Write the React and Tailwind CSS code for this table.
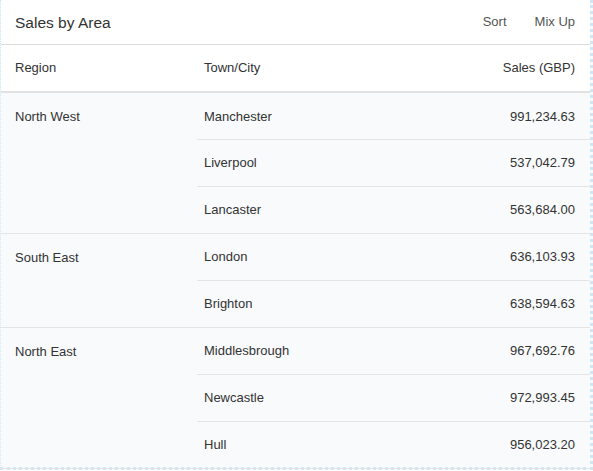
const data = [
  {
    region: "North West",
    towns: [
      ["Manchester", "991,234.63"],
      ["Liverpool", "537,042.79"],
      ["Lancaster", "563,684.00"],
    ],
  },
  {
    region: "South East",
    towns: [
      ["London", "636,103.93"],
      ["Brighton", "638,594.63"],
    ],
  },
  {
    region: "North East",
    towns: [
      ["Middlesbrough", "967,692.76"],
      ["Newcastle", "972,993.45"],
      ["Hull", "956,023.20"],
    ],
  },
];

export default function App() {
  return (
    <div className="h-[471px] w-[593px] bg-white font-['Liberation_Sans',Arial,sans-serif] text-[#333]">
      <div className="w-[593px] h-[470px] border-l border-r-[3px] border-b-[3px] border-dotted border-l-[#cfe6f5] border-r-[#cfe6f5] border-b-[#cfe6f5] bg-[#f9fafc] flex flex-col">
        <div className="h-[45px] shrink-0 flex items-center justify-between pl-[14px] pr-[15px] bg-white border-b border-[#dcdcdc]">
          <span className="text-[15.5px] text-[#333] mt-[1px]">Sales by Area</span>
          <div className="flex gap-[28px] text-[13px] text-[#555]">
            <span>Sort</span>
            <span>Mix Up</span>
          </div>
        </div>
        <table className="w-full border-collapse text-[13px]">
          <thead>
            <tr className="h-[47px] bg-white border-b-2 border-[#e2e2e2]">
              <th className="w-[196px] pl-[14px] text-left font-normal">Region</th>
              <th className="pl-[7px] text-left font-normal">Town/City</th>
              <th className="pr-[15px] text-right font-normal">Sales (GBP)</th>
            </tr>
          </thead>
          <tbody>
            {data.map((g) =>
              g.towns.map((t, i) => (
                <tr
                  key={t[0]}
                  className={
                    i === g.towns.length - 1
                      ? "h-[47px] border-b border-[#e4e4e4]"
                      : "h-[47px]"
                  }
                >
                  {i === 0 && (
                    <td
                      rowSpan={g.towns.length}
                      className="pl-[14px] align-top pt-[14px]"
                    >
                      {g.region}
                    </td>
                  )}
                  <td
                    className={
                      i === g.towns.length - 1
                        ? "pl-[7px] pt-[1px]"
                        : "pl-[7px] pt-[1px] border-b border-[#e4e4e4]"
                    }
                  >
                    {t[0]}
                  </td>
                  <td
                    className={
                      i === g.towns.length - 1
                        ? "pr-[15px] pt-[1px] text-right"
                        : "pr-[15px] pt-[1px] text-right border-b border-[#e4e4e4]"
                    }
                  >
                    {t[1]}
                  </td>
                </tr>
              ))
            )}
          </tbody>
        </table>
      </div>
    </div>
  );
}
